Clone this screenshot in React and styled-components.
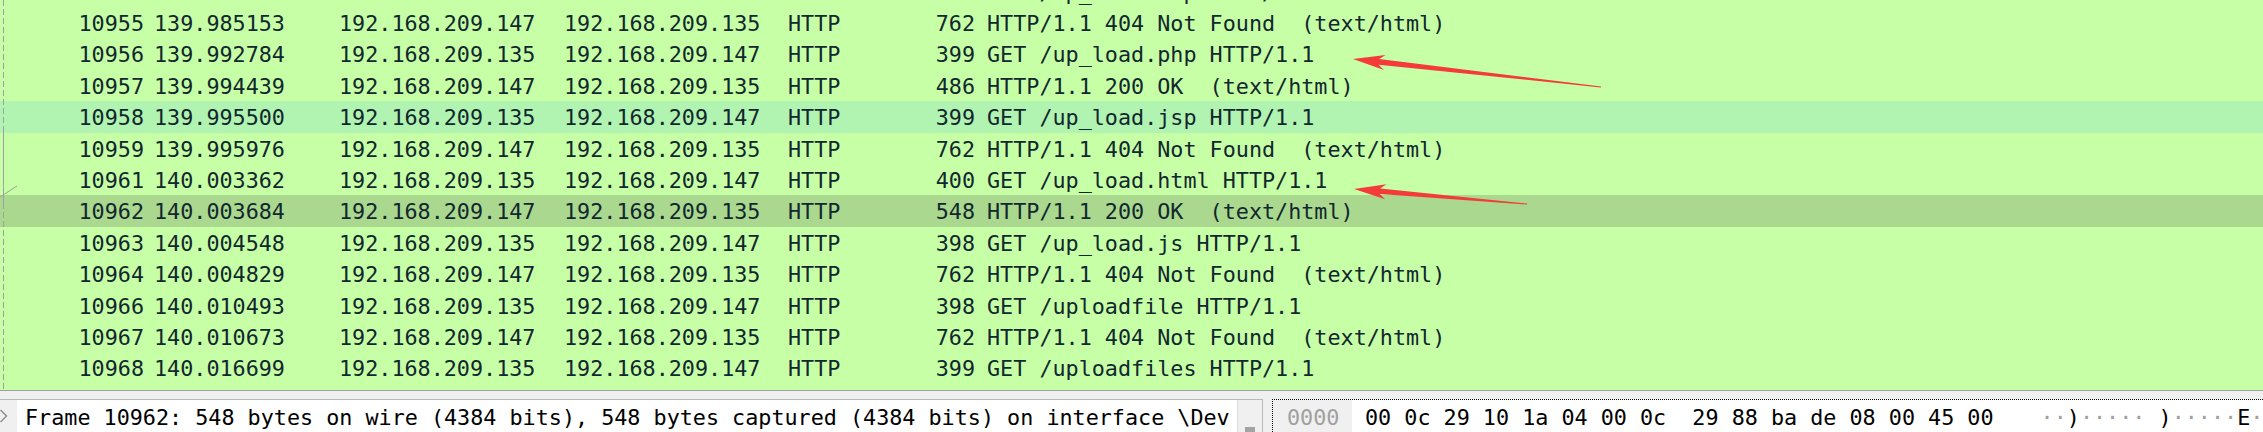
import React from "react";
import styled, { createGlobalStyle } from "styled-components";

const MONO = `"DejaVu Sans Mono", "Liberation Mono", monospace`;
const ROW_H = 31.4;

const GlobalStyle = createGlobalStyle`
  html, body {
    margin: 0;
    padding: 0;
    background: #f0f0f0;
  }
  body {
    width: 2263px;
    height: 432px;
    overflow: hidden;
  }
`;

const Window = styled.div`
  width: 2263px;
  height: 432px;
  display: flex;
  flex-direction: column;
  overflow: hidden;
  background: #f0f0f0;
  font-family: ${MONO};
  font-size: 21.76px;
`;

const PacketList = styled.div`
  position: relative;
  flex: none;
  height: 390px;
  overflow: hidden;
  background: #c6ffa6;
  color: #12272e;
`;

const Rows = styled.div`
  margin-top: -24.4px;
`;

const bands = {
  hover: "#b1f3b1",
  selected: "#a9d88e",
};

const Row = styled.div`
  display: grid;
  grid-template-columns: 149px 185px 225px 224px 110px 87px 1fr;
  height: ${ROW_H}px;
  line-height: 33px;
  white-space: pre;
  background: ${(p) => bands[p.$state] || "transparent"};
`;

const Cell = styled.div`
  overflow: hidden;
  padding-left: ${(p) => (p.$pl ?? 5)}px;
  padding-right: 5px;
  text-align: ${(p) => (p.$right ? "right" : "left")};
`;

const Overlay = styled.svg`
  position: absolute;
  top: 0;
  left: 0;
  pointer-events: none;
`;

const Splitter = styled.div`
  flex: none;
  height: 8px;
  border-top: 1px solid #a0a0a0;
  background: #f0f0f0;
`;

const Panes = styled.div`
  flex: 1;
  display: flex;
  gap: 9px;
  min-height: 0;
`;

const DetailPane = styled.div`
  flex: none;
  width: 1263px;
  box-sizing: border-box;
  display: flex;
  border-top: 1px solid #b9b9b9;
  border-right: 1px solid #b9b9b9;
  background: #fff;
`;

const Gutter = styled.div`
  flex: none;
  width: 17px;
  background: #f0f0f0;
`;

const PaneText = styled.div`
  flex: 1;
  min-width: 0;
  overflow: hidden;
  padding: 2px 0 0 ${(p) => p.$pl || 0}px;
  line-height: 31px;
  white-space: pre;
  color: ${(p) => p.$color || "#000"};
  background: ${(p) => p.$bg || "#fff"};
`;

const ScrollBar = styled.div`
  flex: none;
  width: 24px;
  border-left: 1px solid #dadada;
  background: #f0f0f0;
`;

const Thumb = styled.div`
  width: 10px;
  height: 10px;
  margin: 27px 0 0 7px;
  background: #a3a3a3;
`;

const BytesPane = styled.div`
  flex: 1;
  display: flex;
  min-width: 0;
  border-top: 1px dotted #000;
  border-left: 1px dotted #000;
  background: #fff;
`;

const Offset = styled(PaneText)`
  flex: none;
  width: 65px;
`;

const Ascii = styled.span`
  margin-left: 47px;
`;

const Dot = styled.span`
  color: #a0a0a0;
`;

const packets = [
  ["10954", "139.984716", "192.168.209.135", "192.168.209.147", "HTTP", "398", "GET /up_load.asp HTTP/1.1"],
  ["10955", "139.985153", "192.168.209.147", "192.168.209.135", "HTTP", "762", "HTTP/1.1 404 Not Found  (text/html)"],
  ["10956", "139.992784", "192.168.209.135", "192.168.209.147", "HTTP", "399", "GET /up_load.php HTTP/1.1"],
  ["10957", "139.994439", "192.168.209.147", "192.168.209.135", "HTTP", "486", "HTTP/1.1 200 OK  (text/html)"],
  ["10958", "139.995500", "192.168.209.135", "192.168.209.147", "HTTP", "399", "GET /up_load.jsp HTTP/1.1", "hover"],
  ["10959", "139.995976", "192.168.209.147", "192.168.209.135", "HTTP", "762", "HTTP/1.1 404 Not Found  (text/html)"],
  ["10961", "140.003362", "192.168.209.135", "192.168.209.147", "HTTP", "400", "GET /up_load.html HTTP/1.1"],
  ["10962", "140.003684", "192.168.209.147", "192.168.209.135", "HTTP", "548", "HTTP/1.1 200 OK  (text/html)", "selected"],
  ["10963", "140.004548", "192.168.209.135", "192.168.209.147", "HTTP", "398", "GET /up_load.js HTTP/1.1"],
  ["10964", "140.004829", "192.168.209.147", "192.168.209.135", "HTTP", "762", "HTTP/1.1 404 Not Found  (text/html)"],
  ["10966", "140.010493", "192.168.209.135", "192.168.209.147", "HTTP", "398", "GET /uploadfile HTTP/1.1"],
  ["10967", "140.010673", "192.168.209.147", "192.168.209.135", "HTTP", "762", "HTTP/1.1 404 Not Found  (text/html)"],
  ["10968", "140.016699", "192.168.209.135", "192.168.209.147", "HTTP", "399", "GET /uploadfiles HTTP/1.1"],
];

const hexBytes = "00 0c 29 10 1a 04 00 0c 29 88 ba de 08 00 45 00".split(" ");

// tapered annotation arrow, tip first
function arrowPoints(tip, tail) {
  const dx = tail[0] - tip[0];
  const dy = tail[1] - tip[1];
  const len = Math.hypot(dx, dy);
  const ux = dx / len, uy = dy / len, nx = -uy, ny = ux;
  const at = (a, b) => [tip[0] + ux * a + nx * b, tip[1] + uy * a + ny * b];
  const pts = [
    at(0, 0),
    at(32, 7.5),
    at(26, 2.8),
    at(len, 0.5),
    at(len, -0.5),
    at(26, -2.8),
    at(32, -7.5),
  ];
  return pts.map((p) => p.map((v) => v.toFixed(1)).join(",")).join(" ");
}

const PacketRow = ({ p }) => (
  <Row $state={p[7]}>
    <Cell $right>{p[0]}</Cell>
    <Cell>{p[1]}</Cell>
    <Cell>{p[2]}</Cell>
    <Cell>{p[3]}</Cell>
    <Cell>{p[4]}</Cell>
    <Cell $right>{p[5]}</Cell>
    <Cell $pl={7}>{p[6]}</Cell>
  </Row>
);

const AsciiDump = () => (
  <Ascii>
    {hexBytes.map((b, i) => {
      const c = parseInt(b, 16);
      const glyph = c >= 0x20 && c < 0x7f ? String.fromCharCode(c) : null;
      return (
        <React.Fragment key={i}>
          {i === 8 ? " " : null}
          {glyph ? glyph : <Dot>·</Dot>}
        </React.Fragment>
      );
    })}
  </Ascii>
);

export default function App() {
  return (
    <Window>
      <GlobalStyle />
      <PacketList>
        <Rows>
          {packets.map((p) => (
            <PacketRow key={p[0]} p={p} />
          ))}
        </Rows>
        <Overlay width="2263" height="390">
          <g stroke="#a0a0a0" strokeWidth="1" fill="none">
            <line x1="3.5" y1="0" x2="3.5" y2="130" strokeDasharray="6 3" />
            <line x1="3.5" y1="130" x2="3.5" y2="203" />
            <line x1="3.5" y1="203" x2="3.5" y2="390" strokeDasharray="6 3" />
            <line x1="0" y1="197" x2="17" y2="186" />
          </g>
          <g fill="#f53a3a">
            <polygon points={arrowPoints([1353, 59], [1601, 87])} />
            <polygon points={arrowPoints([1354, 189], [1527, 204])} />
          </g>
        </Overlay>
      </PacketList>
      <Splitter />
      <Panes>
        <DetailPane>
          <Gutter>
            <svg width="17" height="31">
              <polyline points="0.5,10 6.5,16 0.5,22" fill="none" stroke="#8c8c8c" strokeWidth="1.4" />
            </svg>
          </Gutter>
          <PaneText $pl={8}>
            Frame 10962: 548 bytes on wire (4384 bits), 548 bytes captured (4384 bits) on interface \Dev
          </PaneText>
          <ScrollBar>
            <Thumb />
          </ScrollBar>
        </DetailPane>
        <BytesPane>
          <Offset $pl={14} $bg="#f0f0f0" $color="#a0a0a0">
            0000
          </Offset>
          <PaneText $pl={13}>
            {hexBytes.slice(0, 8).join(" ") + "  " + hexBytes.slice(8).join(" ")}
            <AsciiDump />
          </PaneText>
        </BytesPane>
      </Panes>
    </Window>
  );
}
